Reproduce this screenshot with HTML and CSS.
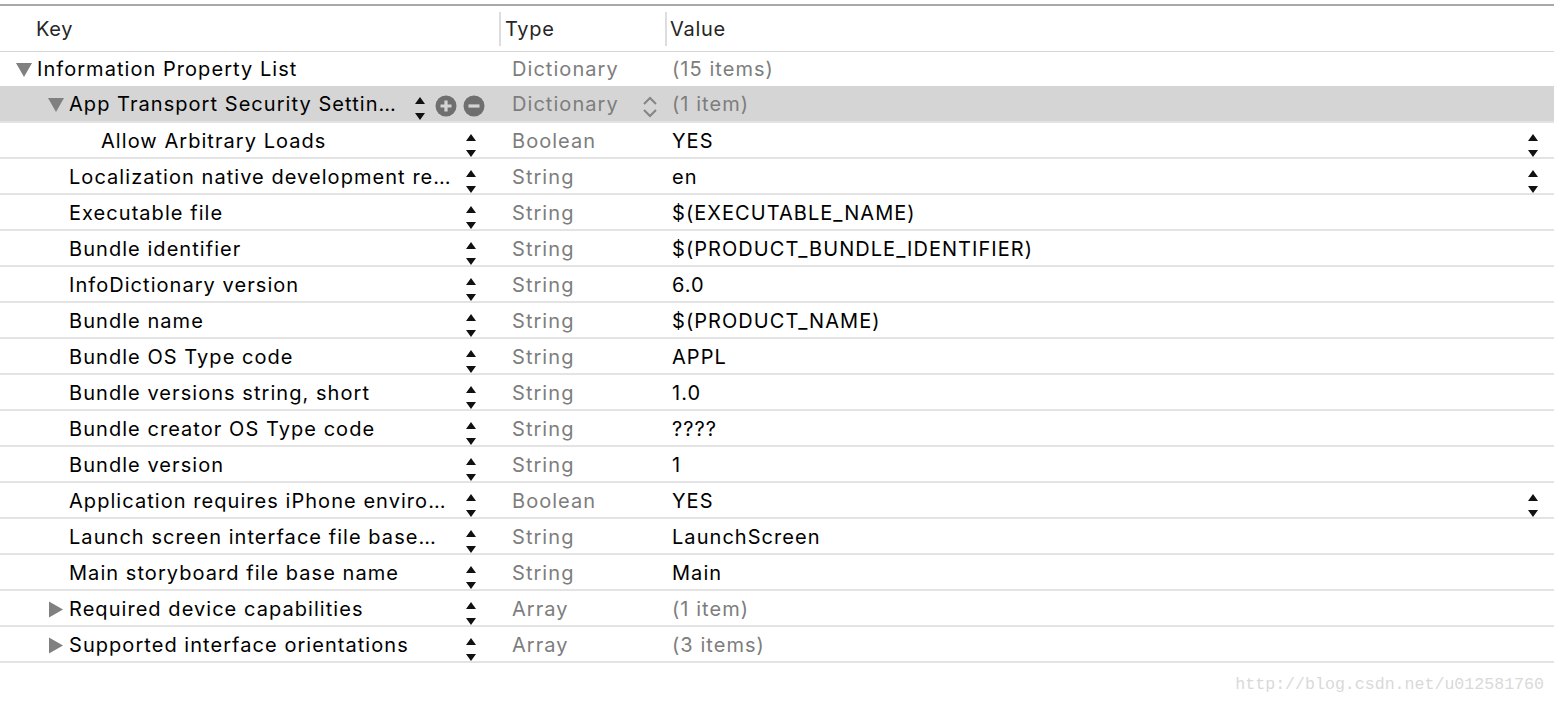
FILE: index.html
```html
<!DOCTYPE html>
<html>
<head>
<meta charset="utf-8">
<link rel="stylesheet" href="styles.css">
</head>
<body>
<div class="topbar"></div>
<div class="header">
  <div class="hk">Key</div>
  <div class="ht">Type</div>
  <div class="hv">Value</div>
</div>
<div class="list">
  <div class="row first">
    <div class="k l0"><span class="disc"><svg width="18" height="15" viewBox="0 0 18 15"><path d="M1 1 L17 1 L9 15 Z" fill="#808080"/></svg></span><span class="kt">Information Property List</span></div>
    <div class="t">Dictionary</div>
    <div class="v muted">(15 items)</div>
  </div>
  <div class="row sel">
    <div class="k l1 selk"><span class="disc"><svg width="18" height="15" viewBox="0 0 18 15"><path d="M1 1 L17 1 L9 15 Z" fill="#808080"/></svg></span><span class="kt">App Transport Security Settin…</span>
      <span class="step"><svg width="10" height="24" viewBox="0 0 10 24"><path d="M5 0 L10 7 L0 7 Z M0 16 L10 16 L5 23 Z" fill="#111"/></svg></span>
      <span class="pm"><svg width="22" height="22" viewBox="0 0 22 22"><circle cx="11" cy="11" r="10.5" fill="#6f6f6f"/><path d="M5.5 11 H16.5 M11 5.5 V16.5" stroke="#d4d4d4" stroke-width="3.2"/></svg></span>
      <span class="pm mn"><svg width="22" height="22" viewBox="0 0 22 22"><circle cx="11" cy="11" r="10.5" fill="#6f6f6f"/><path d="M5.5 11 H16.5" stroke="#d4d4d4" stroke-width="3.2"/></svg></span>
    </div>
    <div class="t">Dictionary<span class="chev"><svg width="16" height="24" viewBox="0 0 16 24"><path d="M2 9 L8 3 L14 9 M2 15 L8 21 L14 15" fill="none" stroke="#858585" stroke-width="2"/></svg></span></div>
    <div class="v muted">(1 item)</div>
  </div>
  <div class="row">
    <div class="k l2"><span class="kt">Allow Arbitrary Loads</span><span class="step"><svg width="10" height="24" viewBox="0 0 10 24"><path d="M5 0 L10 7 L0 7 Z M0 16 L10 16 L5 23 Z" fill="#111"/></svg></span></div>
    <div class="t">Boolean</div>
    <div class="v">YES<span class="vstep"><svg width="10" height="24" viewBox="0 0 10 24"><path d="M5 0 L10 7 L0 7 Z M0 16 L10 16 L5 23 Z" fill="#111"/></svg></span></div>
  </div>
  <div class="row">
    <div class="k l1"><span class="disc"></span><span class="kt">Localization native development re…</span><span class="step"><svg width="10" height="24" viewBox="0 0 10 24"><path d="M5 0 L10 7 L0 7 Z M0 16 L10 16 L5 23 Z" fill="#111"/></svg></span></div>
    <div class="t">String</div>
    <div class="v">en<span class="vstep"><svg width="10" height="24" viewBox="0 0 10 24"><path d="M5 0 L10 7 L0 7 Z M0 16 L10 16 L5 23 Z" fill="#111"/></svg></span></div>
  </div>
  <div class="row">
    <div class="k l1"><span class="disc"></span><span class="kt">Executable file</span><span class="step"><svg width="10" height="24" viewBox="0 0 10 24"><path d="M5 0 L10 7 L0 7 Z M0 16 L10 16 L5 23 Z" fill="#111"/></svg></span></div>
    <div class="t">String</div>
    <div class="v">$(EXECUTABLE_NAME)</div>
  </div>
  <div class="row">
    <div class="k l1"><span class="disc"></span><span class="kt">Bundle identifier</span><span class="step"><svg width="10" height="24" viewBox="0 0 10 24"><path d="M5 0 L10 7 L0 7 Z M0 16 L10 16 L5 23 Z" fill="#111"/></svg></span></div>
    <div class="t">String</div>
    <div class="v">$(PRODUCT_BUNDLE_IDENTIFIER)</div>
  </div>
  <div class="row">
    <div class="k l1"><span class="disc"></span><span class="kt">InfoDictionary version</span><span class="step"><svg width="10" height="24" viewBox="0 0 10 24"><path d="M5 0 L10 7 L0 7 Z M0 16 L10 16 L5 23 Z" fill="#111"/></svg></span></div>
    <div class="t">String</div>
    <div class="v">6.0</div>
  </div>
  <div class="row">
    <div class="k l1"><span class="disc"></span><span class="kt">Bundle name</span><span class="step"><svg width="10" height="24" viewBox="0 0 10 24"><path d="M5 0 L10 7 L0 7 Z M0 16 L10 16 L5 23 Z" fill="#111"/></svg></span></div>
    <div class="t">String</div>
    <div class="v">$(PRODUCT_NAME)</div>
  </div>
  <div class="row">
    <div class="k l1"><span class="disc"></span><span class="kt">Bundle OS Type code</span><span class="step"><svg width="10" height="24" viewBox="0 0 10 24"><path d="M5 0 L10 7 L0 7 Z M0 16 L10 16 L5 23 Z" fill="#111"/></svg></span></div>
    <div class="t">String</div>
    <div class="v">APPL</div>
  </div>
  <div class="row">
    <div class="k l1"><span class="disc"></span><span class="kt">Bundle versions string, short</span><span class="step"><svg width="10" height="24" viewBox="0 0 10 24"><path d="M5 0 L10 7 L0 7 Z M0 16 L10 16 L5 23 Z" fill="#111"/></svg></span></div>
    <div class="t">String</div>
    <div class="v">1.0</div>
  </div>
  <div class="row">
    <div class="k l1"><span class="disc"></span><span class="kt">Bundle creator OS Type code</span><span class="step"><svg width="10" height="24" viewBox="0 0 10 24"><path d="M5 0 L10 7 L0 7 Z M0 16 L10 16 L5 23 Z" fill="#111"/></svg></span></div>
    <div class="t">String</div>
    <div class="v">????</div>
  </div>
  <div class="row">
    <div class="k l1"><span class="disc"></span><span class="kt">Bundle version</span><span class="step"><svg width="10" height="24" viewBox="0 0 10 24"><path d="M5 0 L10 7 L0 7 Z M0 16 L10 16 L5 23 Z" fill="#111"/></svg></span></div>
    <div class="t">String</div>
    <div class="v">1</div>
  </div>
  <div class="row">
    <div class="k l1"><span class="disc"></span><span class="kt">Application requires iPhone enviro…</span><span class="step"><svg width="10" height="24" viewBox="0 0 10 24"><path d="M5 0 L10 7 L0 7 Z M0 16 L10 16 L5 23 Z" fill="#111"/></svg></span></div>
    <div class="t">Boolean</div>
    <div class="v">YES<span class="vstep"><svg width="10" height="24" viewBox="0 0 10 24"><path d="M5 0 L10 7 L0 7 Z M0 16 L10 16 L5 23 Z" fill="#111"/></svg></span></div>
  </div>
  <div class="row">
    <div class="k l1"><span class="disc"></span><span class="kt">Launch screen interface file base…</span><span class="step"><svg width="10" height="24" viewBox="0 0 10 24"><path d="M5 0 L10 7 L0 7 Z M0 16 L10 16 L5 23 Z" fill="#111"/></svg></span></div>
    <div class="t">String</div>
    <div class="v">LaunchScreen</div>
  </div>
  <div class="row">
    <div class="k l1"><span class="disc"></span><span class="kt">Main storyboard file base name</span><span class="step"><svg width="10" height="24" viewBox="0 0 10 24"><path d="M5 0 L10 7 L0 7 Z M0 16 L10 16 L5 23 Z" fill="#111"/></svg></span></div>
    <div class="t">String</div>
    <div class="v">Main</div>
  </div>
  <div class="row">
    <div class="k l1"><span class="disc"><svg width="16" height="17" viewBox="0 0 16 17"><path d="M1 0.5 L15 8.5 L1 16.5 Z" fill="#808080"/></svg></span><span class="kt">Required device capabilities</span><span class="step"><svg width="10" height="24" viewBox="0 0 10 24"><path d="M5 0 L10 7 L0 7 Z M0 16 L10 16 L5 23 Z" fill="#111"/></svg></span></div>
    <div class="t">Array</div>
    <div class="v muted">(1 item)</div>
  </div>
  <div class="row">
    <div class="k l1"><span class="disc"><svg width="16" height="17" viewBox="0 0 16 17"><path d="M1 0.5 L15 8.5 L1 16.5 Z" fill="#808080"/></svg></span><span class="kt">Supported interface orientations</span><span class="step"><svg width="10" height="24" viewBox="0 0 10 24"><path d="M5 0 L10 7 L0 7 Z M0 16 L10 16 L5 23 Z" fill="#111"/></svg></span></div>
    <div class="t">Array</div>
    <div class="v muted">(3 items)</div>
  </div>
</div>
<div class="footer">http://blog.csdn.net/u012581760</div>
</body>
</html>
```
FILE: styles.css
```css
html, body {
  margin: 0;
  padding: 0;
  background: #ffffff;
  overflow: hidden;
}
body {
  width: 1554px;
  height: 704px;
  font-family: Inter, "Liberation Sans", sans-serif;
  color: #000000;
}
.topbar {
  height: 2px;
  margin-top: 4px;
  background: #a9a9a9;
}
.header {
  display: grid;
  grid-template-columns: 499px 166px 1fr;
  border-bottom: 1px solid #d6d6d6;
  box-sizing: border-box;
  height: 46px;
  font-size: 20px;
  letter-spacing: 0.7px;
  color: #262626;
  align-items: center;
}
.hk {
  padding-left: 36px;
}
.ht, .hv {
  border-left: 2px solid #dddddd;
  height: 34px;
  line-height: 34px;
}
.ht { padding-left: 4px; }
.hv { padding-left: 3px; }
.list {
  font-size: 20px;
  letter-spacing: 1.05px;
  font-weight: 400;
}
.row {
  display: grid;
  grid-template-columns: 499px 166px 1fr;
  height: 36px;
  border-bottom: 2px solid #e3e3e3;
  box-sizing: border-box;
}
.row.first {
  height: 34px;
  border-bottom: none;
}
.row.sel {
  height: 37px;
  background: #d5d5d5;
}
.k, .t, .v {
  display: flex;
  align-items: center;
  min-width: 0;
  white-space: nowrap;
}
.k {
  padding-right: 23px;
}
.k.selk {
  padding-right: 14px;
}
.l0 { padding-left: 13px; }
.l1 { padding-left: 45px; }
.l2 { padding-left: 101px; }
.disc {
  width: 22px;
  flex: none;
  display: flex;
  align-items: center;
  justify-content: center;
  margin-right: 2px;
  margin-top: 1px;
}
.disc svg { display: block; }
.kt {
  flex: 1;
  overflow: hidden;
  color: #000000;
}
.step, .vstep {
  flex: none;
  align-self: flex-start;
  margin-top: 11px;
  height: 24px;
}
.step svg, .vstep svg, .pm svg, .chev svg { display: block; }
.pm {
  flex: none;
  margin-left: 10px;
  margin-top: 4px;
}
.pm.mn { margin-left: 6px; }
.t {
  padding-left: 13px;
  padding-right: 7px;
  color: #7d7d7d;
}
.chev {
  margin-left: auto;
  margin-top: 6px;
}
.v {
  padding-left: 7px;
  padding-right: 16px;
  color: #000000;
}
.v.muted { color: #7d7d7d; }
.vstep { margin-left: auto; }
.footer {
  text-align: right;
  padding-right: 10px;
  margin-top: 12px;
  font-family: "Liberation Mono", monospace;
  font-size: 16.6px;
  color: #d9d9d9;
  letter-spacing: 0;
  font-weight: normal;
}
```
